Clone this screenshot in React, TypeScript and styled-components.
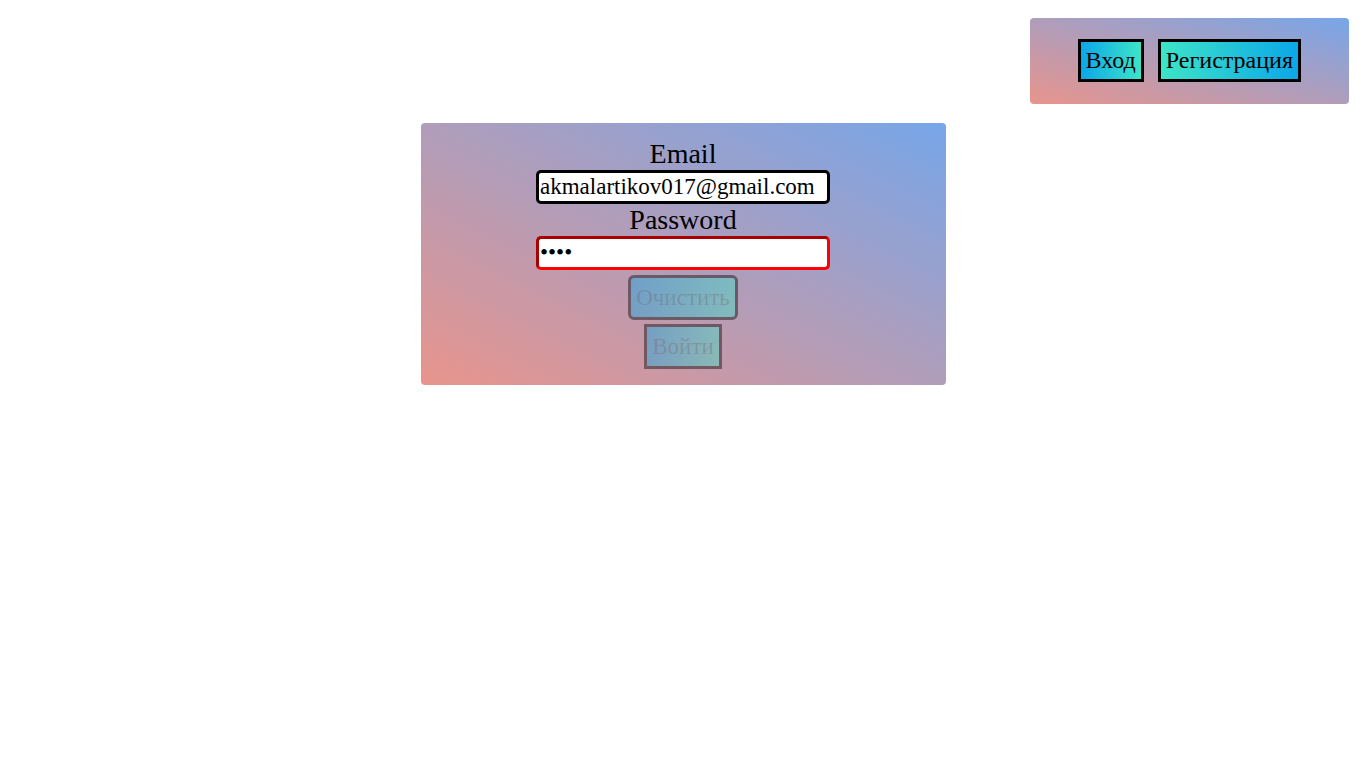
import React from "react";
import styled, { createGlobalStyle } from "styled-components";

const GlobalStyle = createGlobalStyle`
  body {
    margin: 8px;
    background: #ffffff;
    font-family: "Liberation Serif", "Times New Roman", serif;
  }
`;

const panelGradient = "linear-gradient(to top right, #e8948c, #77a6e9)";

const Header = styled.header`
  display: flex;
  justify-content: flex-end;
  margin: 10px 9px 0 0;
`;

const Nav = styled.nav`
  display: flex;
  gap: 14px;
  padding: 21px 48px 22px;
  border-radius: 4px;
  background: ${panelGradient};
`;

const NavButton = styled.button<{ $reverse?: boolean }>`
  font-family: "Liberation Serif", "Times New Roman", serif;
  font-size: 24px;
  line-height: 27px;
  color: #000;
  padding: 5px;
  border: 3px solid #000;
  border-radius: 0;
  cursor: pointer;
  background: linear-gradient(
    to ${(p) => (p.$reverse ? "left" : "right")},
    #0ba7e8,
    #3de5c7
  );
`;

const Main = styled.main`
  display: flex;
  justify-content: center;
  margin-top: 19px;
`;

const Form = styled.form`
  width: 525px;
  box-sizing: border-box;
  display: flex;
  flex-direction: column;
  align-items: center;
  padding: 16px 0;
  border-radius: 4px;
  background: ${panelGradient};
`;

const Label = styled.label`
  font-size: 28px;
  line-height: 29px;
  padding-bottom: 2px;
  color: #000;
`;

const Input = styled.input<{ $invalid?: boolean }>`
  box-sizing: border-box;
  width: 294px;
  height: 34px;
  padding: 0 1px;
  margin: 0;
  font-family: "Liberation Serif", "Times New Roman", serif;
  font-size: 23px;
  color: #000;
  background: #fff;
  border: 3px ${(p) => (p.$invalid ? "inset #ff0000" : "solid #000")};
  border-radius: 5px;
  outline: none;
`;

const PasswordLabel = styled(Label)`
  margin-top: 1px;
`;

const ActionButton = styled.button<{ $rounded?: boolean; $gap: number }>`
  margin-top: ${(p) => p.$gap}px;
  font-family: "Liberation Serif", "Times New Roman", serif;
  font-size: 23px;
  line-height: 27px;
  padding: 6px 5px;
  color: rgba(16, 16, 16, 0.35);
  border: 3px solid #000;
  border-radius: ${(p) => (p.$rounded ? "6px" : "0")};
  background: linear-gradient(to right, #0ba7e8, #3de5c7);
  opacity: 0.42;
`;

export default function App() {
  return (
    <>
      <GlobalStyle />
      <Header>
        <Nav>
          <NavButton>Вход</NavButton>
          <NavButton $reverse>Регистрация</NavButton>
        </Nav>
      </Header>
      <Main>
        <Form onSubmit={(e) => e.preventDefault()}>
          <Label htmlFor="email">Email</Label>
          <Input id="email" type="email" defaultValue="akmalartikov017@gmail.com" />
          <PasswordLabel htmlFor="password">Password</PasswordLabel>
          <Input id="password" type="password" defaultValue="1234" $invalid />
          <ActionButton type="button" disabled $rounded $gap={5}>
            Очистить
          </ActionButton>
          <ActionButton type="submit" disabled $gap={4}>
            Войти
          </ActionButton>
        </Form>
      </Main>
    </>
  );
}
